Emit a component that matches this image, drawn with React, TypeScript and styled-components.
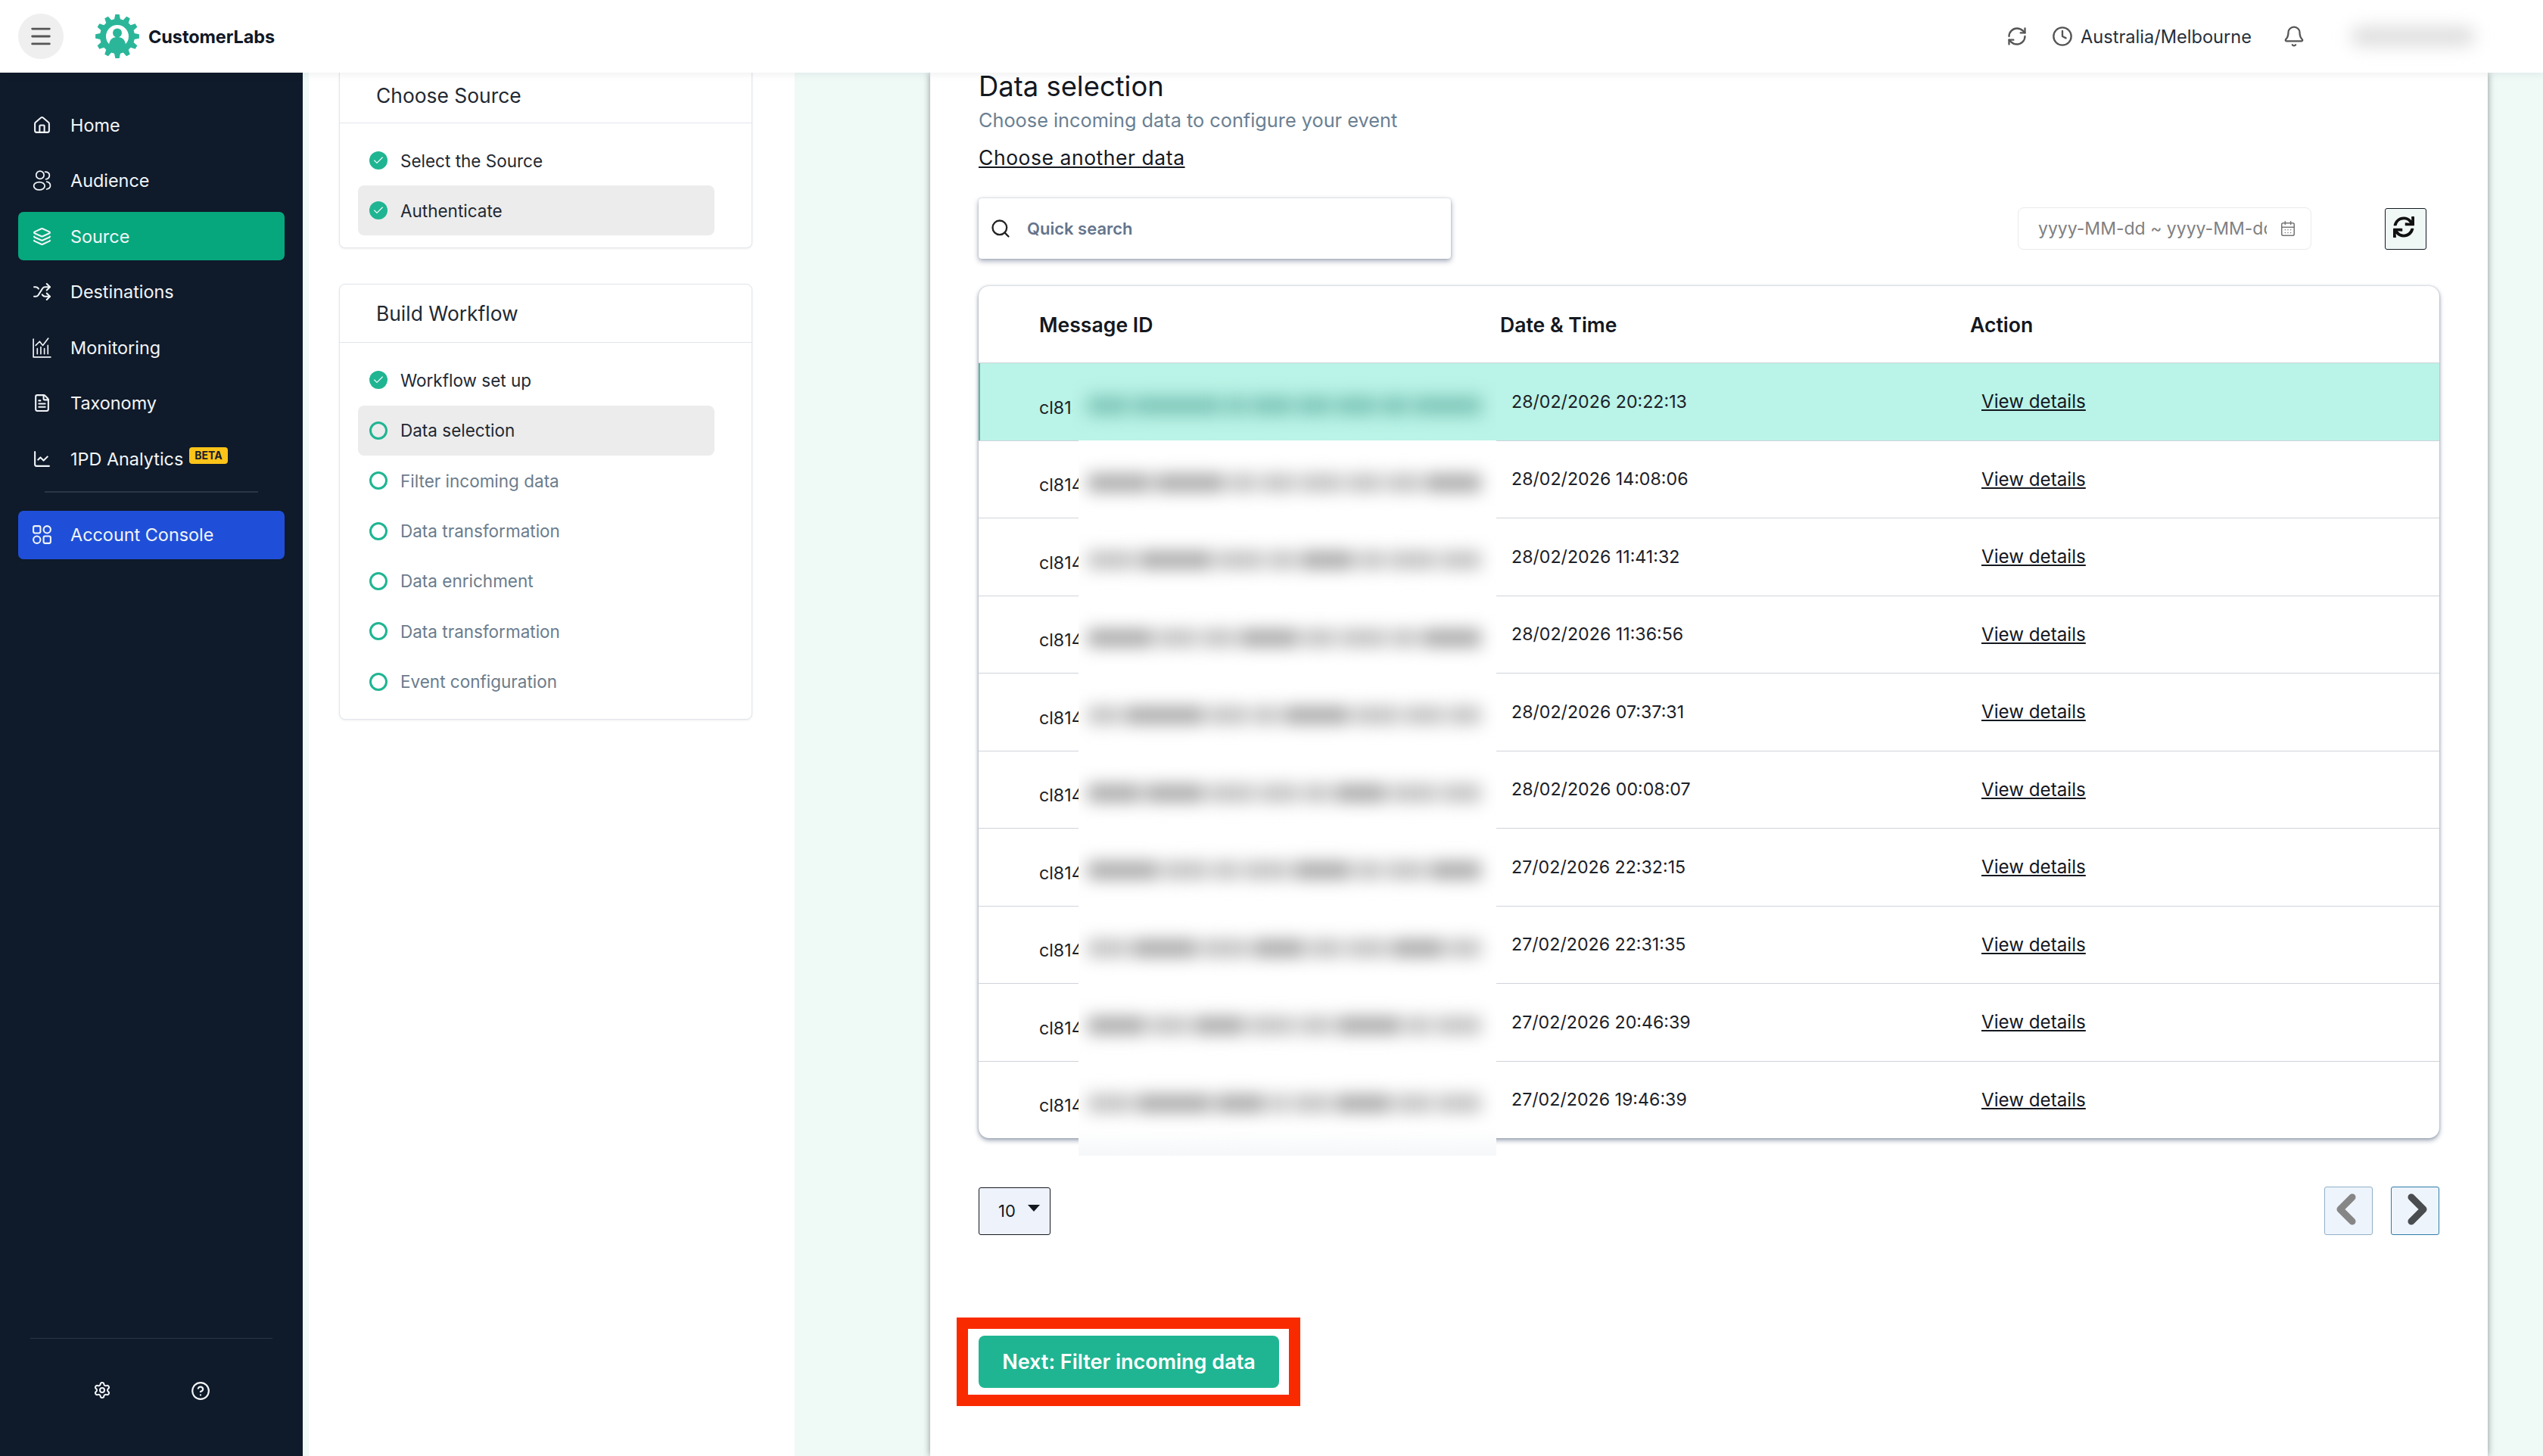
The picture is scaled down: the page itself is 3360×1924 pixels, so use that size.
import React from "react";
import styled, { createGlobalStyle } from "styled-components";
import {
  Bell,
  CalendarDays,
  Check,
  ChevronLeft,
  ChevronRight,
  CircleHelp,
  Clock,
  FileText,
  House,
  Layers,
  ChartLine,
  Menu,
  RefreshCw,
  Search,
  Settings,
  Shuffle,
} from "lucide-react";
import { FaSync } from "react-icons/fa";

const GlobalStyle = createGlobalStyle`
  html, body {
    margin: 0;
    height: 100%;
    overflow: hidden;
    background: #fff;
    font-family: Inter, "Liberation Sans", sans-serif;
  }
  * { box-sizing: border-box; }
`;

const Page = styled.div`
  width: 3360px;
  height: 1924px;
  display: flex;
  flex-direction: column;
  overflow: hidden;
`;

const TopBar = styled.header`
  height: 96px;
  flex: none;
  display: flex;
  align-items: center;
  padding: 0 90px 0 24px;
  background: #fff;
  box-shadow: 0 2px 10px rgba(40, 50, 60, 0.08);
  position: relative;
  z-index: 5;
`;

const MenuButton = styled.div`
  width: 60px;
  height: 60px;
  border-radius: 50%;
  background: #efefef;
  color: #555;
  display: flex;
  align-items: center;
  justify-content: center;
  margin-right: 42px;
`;

const Brand = styled.div`
  font-size: 23.5px;
  font-weight: 700;
  color: #111827;
  margin-left: 12px;
  letter-spacing: -0.1px;
`;

const TopRight = styled.div`
  margin-left: auto;
  display: flex;
  align-items: center;
  color: #555;
`;

const ClockSlot = styled.span`
  margin-left: 32px;
  display: flex;
`;

const Zone = styled.span`
  width: 227px;
  margin: 0 40px 0 10px;
  font-size: 23.6px;
  color: #27303c;
  white-space: nowrap;
`;

const BlurredUser = styled.div`
  width: 164px;
  height: 26px;
  margin-left: 60px;
  border-radius: 13px;
  background: #dedede;
  filter: blur(11px);
`;

const Body = styled.div`
  flex: 1;
  min-height: 0;
  display: flex;
`;

const Sidebar = styled.aside`
  width: 400px;
  flex: none;
  background: #0f1a2a;
  padding-top: 37px;
  display: flex;
  flex-direction: column;
`;

const NavList = styled.nav`
  display: flex;
  flex-direction: column;
  gap: 9.6px;
  margin: 0 24px;
`;

const NavItem = styled.div<{ $bg?: string }>`
  height: 64px;
  display: flex;
  align-items: center;
  gap: 25px;
  padding-left: 19px;
  border-radius: 7px;
  background: ${(p) => p.$bg ?? "transparent"};
  color: #f2f5f8;
  font-size: 23.4px;
  white-space: nowrap;
  svg {
    width: 25px;
    height: 29px;
    flex: none;
  }
`;

const BetaBadge = styled.span`
  height: 22px;
  padding: 0 7px;
  margin: -10px 0 0 -17px;
  border-radius: 4px;
  background: #fcc419;
  color: #17202c;
  font-size: 14px;
  font-weight: 700;
  line-height: 22px;
`;

const NavDivider = styled.div`
  height: 2px;
  margin: 1px 35px 14px;
  background: #2a3546;
`;

const SideFooter = styled.div`
  margin: auto 40px 0;
  border-top: 1px solid #2a3546;
  padding: 56px 0 73px 83px;
  display: flex;
  gap: 105px;
  color: #f2f5f8;
`;

const Main = styled.main`
  flex: 1;
  min-width: 0;
  display: flex;
  background: #eff9f6;
`;

const StepsColumn = styled.div`
  width: 642px;
  margin-left: 8px;
  padding-left: 40px;
  background: #fff;
  flex: none;
`;

const StepCard = styled.section<{ $open?: boolean }>`
  width: 546px;
  background: #fff;
  border: 1px solid #e1e5ea;
  border-top: ${(p) => (p.$open ? "none" : "1px solid #e1e5ea")};
  border-radius: ${(p) => (p.$open ? "0 0 8px 8px" : "8px")};
  box-shadow: 0 1px 3px rgba(30, 40, 60, 0.08);
  margin-bottom: 47px;
`;

const CardTitle = styled.h3<{ $height: number; $nudge?: number }>`
  height: ${(p) => p.$height}px;
  margin: 0;
  padding: 0 0 ${(p) => p.$nudge ?? 0}px 48px;
  display: flex;
  align-items: center;
  border-bottom: 1px solid #e1e5ea;
  font-size: 26.4px;
  font-weight: 400;
  color: #1f2933;
`;

const StepList = styled.div`
  padding: 16px 49px 16px 24px;
  display: flex;
  flex-direction: column;
  gap: 0.4px;
`;

const StepRow = styled.div<{ $active?: boolean; $muted?: boolean }>`
  height: 66px;
  display: flex;
  align-items: center;
  gap: 17px;
  padding-left: 15px;
  border-radius: 8px;
  background: ${(p) => (p.$active ? "#ececec" : "transparent")};
  color: ${(p) => (p.$muted ? "#6b7c8c" : "#1f2933")};
  font-size: 22.5px;
`;

const DoneDot = styled.span`
  width: 24px;
  height: 24px;
  border-radius: 50%;
  background: #20b592;
  color: #fff;
  display: flex;
  align-items: center;
  justify-content: center;
`;

const OpenDot = styled.span`
  width: 24px;
  height: 24px;
  border-radius: 50%;
  border: 3px solid #20b592;
`;

const Panel = styled.div`
  width: 2058px;
  margin-left: 179px;
  flex: none;
  padding: 0 64px;
  background: #fff;
  box-shadow: 0 0 9px rgba(50, 65, 65, 0.55);
`;

const Heading = styled.h2`
  margin: 0;
  font-size: 36.4px;
  line-height: 36px;
  font-weight: 400;
  color: #14181f;
`;

const SubHeading = styled.p`
  margin: 11px 0 0;
  font-size: 25.3px;
  line-height: 32px;
  color: #6b7f92;
`;

const ChangeLink = styled.a`
  display: block;
  margin-top: 18px;
  font-size: 26.5px;
  line-height: 30px;
  letter-spacing: 0.55px;
  color: #14181f;
  text-decoration: underline;
`;

const Toolbar = styled.div`
  margin-top: 39px;
  height: 80px;
  display: flex;
  align-items: center;
`;

const SearchBox = styled.div`
  width: 624px;
  height: 80px;
  display: flex;
  align-items: center;
  gap: 21px;
  padding-left: 15px;
  border-radius: 4px;
  background: #fff;
  box-shadow: 0 3px 7px rgba(50, 65, 100, 0.45), 0 0 2px rgba(50, 65, 100, 0.3);
  color: #222;
`;

const SearchLabel = styled.span`
  font-size: 22px;
  font-weight: 600;
  color: #64748b;
`;

const DateRange = styled.div`
  width: 388px;
  height: 56px;
  margin-left: auto;
  padding: 0 19px 0 26px;
  display: flex;
  align-items: center;
  justify-content: space-between;
  border: 1px solid #e8eaed;
  border-radius: 8px;
  color: #777;
`;

const DateText = styled.span`
  width: 302px;
  overflow: hidden;
  white-space: nowrap;
  font-size: 23px;
  color: #808080;
`;

const ReloadButton = styled.div`
  width: 55px;
  height: 55px;
  margin: 0 17px 0 97px;
  padding: 0 6px 5px 0;
  display: flex;
  align-items: center;
  justify-content: center;
  background: #f0f8f6;
  border: 1.5px solid #14181f;
  border-radius: 3px;
  color: #111;
`;

const TableCard = styled.div`
  margin-top: 36px;
  border-radius: 14px;
  background: #fff;
  box-shadow: 0 3px 6px rgba(40, 60, 90, 0.45), 0 0 3px rgba(40, 60, 90, 0.3);
`;

const headerGrid = `
  display: grid;
  grid-template-columns: 689px 621px 1fr;
  align-items: center;
`;

const TableHead = styled.div`
  ${headerGrid}
  height: 101px;
`;

const HeadCell = styled.div<{ $pad?: number }>`
  padding-left: ${(p) => p.$pad ?? 0}px;
  font-size: 26.6px;
  font-weight: 600;
  color: #14181f;
`;

const TableRow = styled.div<{ $selected?: boolean; $last?: boolean }>`
  ${headerGrid}
  position: relative;
  height: 102.5px;
  background: ${(p) => (p.$selected ? "#baf3e7" : "transparent")};
  border-top: 1px solid #cfd4da;
  box-shadow: ${(p) => (p.$selected ? "inset 2px 0 0 #5fb5a3" : "none")};
  border-radius: ${(p) => (p.$last ? "0 0 14px 14px" : "0")};
  font-size: 23.2px;
  color: #1c2128;
`;

const IdCell = styled.div`
  padding: 16px 0 0 80px;
`;

const DateCell = styled.div`
  padding-left: 15px;
`;

const DetailsLink = styled.a`
  padding-left: 15px;
  font-size: 24.2px;
  text-decoration: underline;
  color: #14181f;
`;

/* masks the message ids, the way the reference was retouched */
const IdMask = styled.div<{ $selected?: boolean; $last?: boolean }>`
  position: absolute;
  left: ${(p) => (p.$selected ? 124 : 132)}px;
  width: ${(p) => (p.$selected ? 560 : 552)}px;
  top: ${(p) => (p.$selected ? 0 : -1)}px;
  bottom: ${(p) => (p.$selected ? "0" : p.$last ? "-23px" : "-1px")};
  z-index: ${(p) => (p.$selected ? 1 : 2)};
  overflow: hidden;
  padding: 44px 20px 0 ${(p) => (p.$selected ? 20 : 12)}px;
  background: ${(p) => (p.$selected ? "#baf3e7" : p.$last ? "linear-gradient(#fff 72%, #f5f7f9)" : "#fff")};
`;

const MaskBlur = styled.div`
  display: flex;
  gap: 6px;
  filter: blur(11px);
`;

const MaskStroke = styled.span<{ $w: number; $selected?: boolean; $strong?: boolean }>`
  flex: ${(p) => p.$w} 0 0;
  height: 24px;
  background: ${(p) => (p.$selected ? "#7cc4b6" : p.$strong ? "#a9a9a9" : "#c2c2c2")};
`;

const Pager = styled.div`
  margin-top: 64px;
  display: flex;
  align-items: center;
  gap: 24px;
`;

const PageSize = styled.div`
  width: 95px;
  height: 63px;
  margin-right: auto;
  padding-left: 25px;
  display: flex;
  align-items: center;
  gap: 16px;
  background: #eef2fa;
  border: 1px solid #14181f;
  border-radius: 3px;
  font-size: 22px;
  color: #14181f;
`;

const Caret = styled.span`
  width: 0;
  height: 0;
  margin-bottom: 8px;
  border-left: 8px solid transparent;
  border-right: 8px solid transparent;
  border-top: 9px solid #14181f;
`;

const PageButton = styled.div<{ $disabled?: boolean }>`
  width: 64px;
  height: 64px;
  display: flex;
  align-items: center;
  justify-content: center;
  padding-bottom: 4px;
  background: #eef4fb;
  border: 1px solid ${(p) => (p.$disabled ? "#8fb0c8" : "#2f7ca8")};
  border-radius: 3px;
  color: ${(p) => (p.$disabled ? "#868686" : "#4a4d50")};
  svg {
    flex: none;
    margin-left: ${(p) => (p.$disabled ? -6 : 6)}px;
  }
`;

const Highlight = styled.div`
  width: fit-content;
  margin: 109px 0 0 -29px;
  padding: 9px 13px 9px 14px;
  border: 15px solid #fa2a00;
`;

const NextButton = styled.button`
  width: 397px;
  height: 69px;
  padding: 0;
  border: none;
  border-radius: 8px;
  background: #20b592;
  color: #fff;
  font-family: inherit;
  font-size: 27px;
  font-weight: 600;
  white-space: nowrap;
`;

function gearPath(cx: number, cy: number, teeth: number, outer: number, inner: number) {
  const pts: string[] = [];
  const step = (Math.PI * 2) / teeth;
  for (let i = 0; i < teeth; i++) {
    const a = i * step - Math.PI / 2;
    const w = step * 0.22;
    [
      [inner, a - w * 1.5],
      [outer, a - w * 0.8],
      [outer, a + w * 0.8],
      [inner, a + w * 1.5],
    ].forEach(([r, t]) => pts.push(`${(cx + r * Math.cos(t)).toFixed(2)},${(cy + r * Math.sin(t)).toFixed(2)}`));
  }
  return `M${pts.join("L")}Z`;
}

const Logo = () => (
  <svg width="58" height="58" viewBox="0 0 58 58">
    <path d={gearPath(29, 29, 12, 29, 23)} fill="#2bb69a" />
    <circle cx="29" cy="29" r="15" fill="#fff" />
    <circle cx="29" cy="24.5" r="6" fill="#2bb69a" />
    <path d="M18 40c1-8 6-10 11-10s10 2 11 10a15 15 0 0 1-22 0z" fill="#2bb69a" />
  </svg>
);

const AudienceIcon = () => (
  <svg viewBox="0 0 24 28" fill="none" stroke="currentColor" strokeWidth="1.7" strokeLinecap="round">
    <circle cx="9.5" cy="7" r="5" />
    <ellipse cx="8.5" cy="21" rx="7" ry="5" />
    <path d="M16 3c3.5 0 5.5 2 5.5 4.5S19.5 12 17 12.5M18 15.5c2.8.6 4.6 2.6 4.6 5 0 2.4-1.8 4-4.6 4.6" />
  </svg>
);

const MonitoringIcon = () => (
  <svg viewBox="0 0 24 28" fill="none" stroke="currentColor" strokeWidth="1.6" strokeLinecap="round" strokeLinejoin="round">
    <path d="M1 3v23h22M6 22v-7M10.5 22v-9M15 22v-7M19.5 22V11M4 11l5-5 4 5 7-9" />
  </svg>
);

const ConsoleIcon = () => (
  <svg viewBox="0 0 24 28" fill="none" stroke="currentColor" strokeWidth="2">
    <rect x="1" y="3" width="9" height="9" rx="2" />
    <circle cx="18.5" cy="7.5" r="4.5" />
    <circle cx="5.5" cy="20.5" r="4.5" />
    <rect x="14" y="16" width="9" height="9" rx="2" />
  </svg>
);

const rows = [
  { date: "28/02/2026 20:22:13", mask: [12, 26, 6, 12, 10, 12, 8, 20] },
  { date: "28/02/2026 14:08:06", mask: [18, 20, 8, 10, 12, 10, 10, 16] },
  { date: "28/02/2026 11:41:32", mask: [14, 22, 14, 8, 16, 8, 14, 12] },
  { date: "28/02/2026 11:36:56", mask: [20, 12, 10, 18, 10, 14, 8, 18] },
  { date: "28/02/2026 07:37:31", mask: [10, 24, 12, 8, 20, 14, 12, 10] },
  { date: "28/02/2026 00:08:07", mask: [16, 18, 14, 12, 8, 16, 14, 12] },
  { date: "27/02/2026 22:32:15", mask: [22, 14, 8, 14, 18, 8, 12, 16] },
  { date: "27/02/2026 22:31:35", mask: [12, 20, 14, 16, 10, 12, 16, 10] },
  { date: "27/02/2026 20:46:39", mask: [18, 12, 16, 14, 10, 20, 8, 14] },
  { date: "27/02/2026 19:46:39", mask: [14, 24, 16, 6, 12, 18, 12, 14] },
];

const sourceSteps = ["Select the Source", "Authenticate"];
const pendingSteps = ["Filter incoming data", "Data transformation", "Data enrichment", "Data transformation", "Event configuration"];

export default function App() {
  return (
    <Page>
      <GlobalStyle />
      <TopBar>
        <MenuButton>
          <Menu size={34} strokeWidth={2} />
        </MenuButton>
        <Logo />
        <Brand>CustomerLabs</Brand>
        <TopRight>
          <RefreshCw size={28} strokeWidth={2} />
          <ClockSlot>
            <Clock size={28} strokeWidth={2} />
          </ClockSlot>
          <Zone>Australia/Melbourne</Zone>
          <Bell size={30} strokeWidth={1.8} />
          <BlurredUser />
        </TopRight>
      </TopBar>
      <Body>
        <Sidebar>
          <NavList>
            <NavItem><House />Home</NavItem>
            <NavItem><AudienceIcon />Audience</NavItem>
            <NavItem $bg="#06a77d"><Layers />Source</NavItem>
            <NavItem><Shuffle />Destinations</NavItem>
            <NavItem><MonitoringIcon />Monitoring</NavItem>
            <NavItem><FileText />Taxonomy</NavItem>
            <NavItem><ChartLine />1PD Analytics<BetaBadge>BETA</BetaBadge></NavItem>
            <NavDivider />
            <NavItem $bg="#1f4fd8"><ConsoleIcon />Account Console</NavItem>
          </NavList>
          <SideFooter>
            <Settings size={24} />
            <CircleHelp size={26} />
          </SideFooter>
        </Sidebar>
        <Main>
          <StepsColumn>
            <StepCard $open>
              <CardTitle $height={67} $nudge={7}>Choose Source</CardTitle>
              <StepList>
                {sourceSteps.map((s, i) => (
                  <StepRow key={s} $active={i === 1}>
                    <DoneDot><Check size={16} strokeWidth={1.6} /></DoneDot>
                    {s}
                  </StepRow>
                ))}
              </StepList>
            </StepCard>
            <StepCard>
              <CardTitle $height={77}>Build Workflow</CardTitle>
              <StepList>
                <StepRow>
                  <DoneDot><Check size={16} strokeWidth={1.6} /></DoneDot>
                  Workflow set up
                </StepRow>
                <StepRow $active>
                  <OpenDot />
                  Data selection
                </StepRow>
                {pendingSteps.map((s, i) => (
                  <StepRow key={i} $muted>
                    <OpenDot />
                    {s}
                  </StepRow>
                ))}
              </StepList>
            </StepCard>
          </StepsColumn>
          <Panel>
            <Heading>Data selection</Heading>
            <SubHeading>Choose incoming data to configure your event</SubHeading>
            <ChangeLink>Choose another data</ChangeLink>
            <Toolbar>
              <SearchBox>
                <Search size={28} strokeWidth={2} />
                <SearchLabel>Quick search</SearchLabel>
              </SearchBox>
              <DateRange>
                <DateText>yyyy-MM-dd ~ yyyy-MM-dd</DateText>
                <CalendarDays size={22} strokeWidth={1.7} />
              </DateRange>
              <ReloadButton>
                <FaSync size={28} />
              </ReloadButton>
            </Toolbar>
            <TableCard>
              <TableHead>
                <HeadCell $pad={80}>Message ID</HeadCell>
                <HeadCell>Date &amp; Time</HeadCell>
                <HeadCell>Action</HeadCell>
              </TableHead>
              {rows.map((r, i) => (
                <TableRow key={r.date} $selected={i === 0} $last={i === 9}>
                  <IdCell>cl814</IdCell>
                  <IdMask $selected={i === 0} $last={i === 9}>
                    <MaskBlur>
                      {r.mask.map((w, j) => (
                        <MaskStroke key={j} $w={w} $selected={i === 0} $strong={w > 15} />
                      ))}
                    </MaskBlur>
                  </IdMask>
                  <DateCell>{r.date}</DateCell>
                  <DetailsLink>View details</DetailsLink>
                </TableRow>
              ))}
            </TableCard>
            <Pager>
              <PageSize>10<Caret /></PageSize>
              <PageButton $disabled><ChevronLeft size={64} strokeWidth={3.4} /></PageButton>
              <PageButton><ChevronRight size={64} strokeWidth={3.4} /></PageButton>
            </Pager>
            <Highlight>
              <NextButton>Next: Filter incoming data</NextButton>
            </Highlight>
          </Panel>
        </Main>
      </Body>
    </Page>
  );
}
